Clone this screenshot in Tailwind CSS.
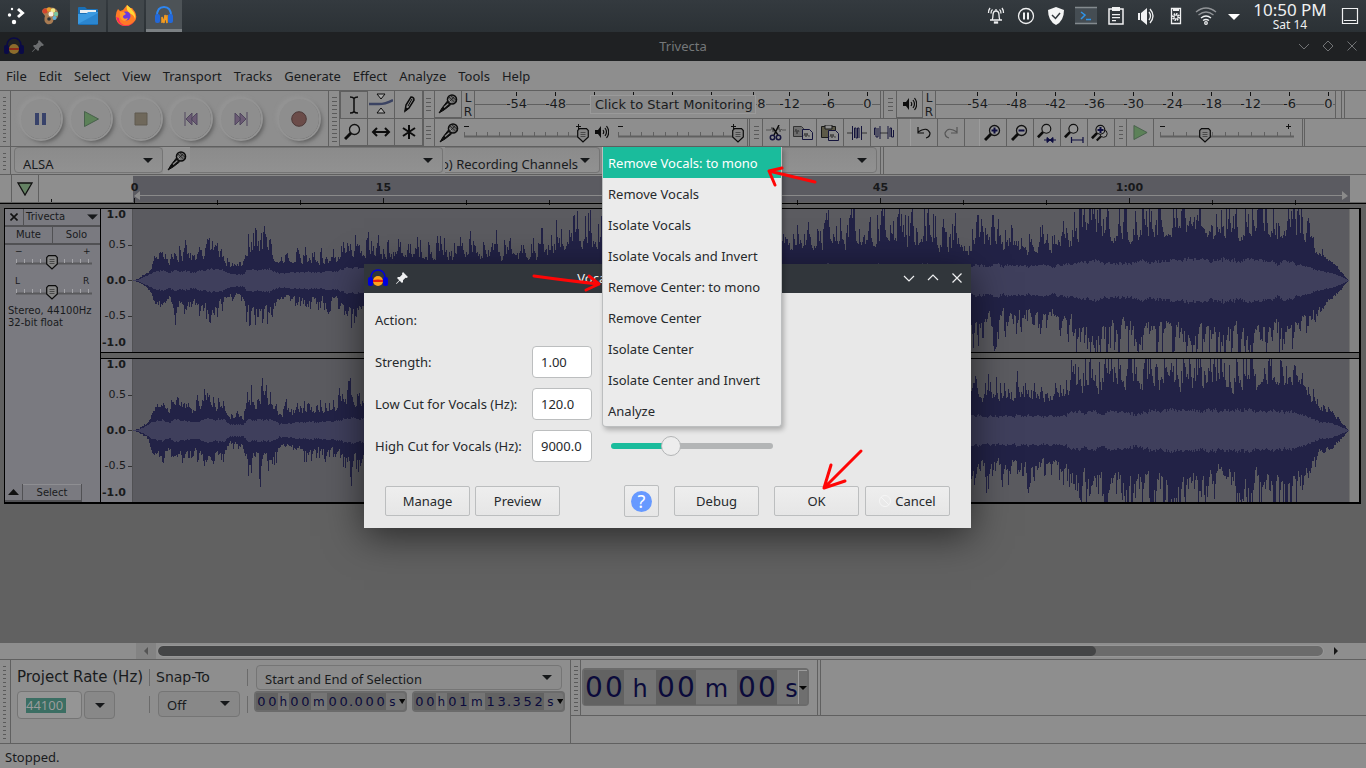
<!DOCTYPE html>
<html lang="en">

<head>
    <meta charset="UTF-8" />
    <meta name="viewport" content="width=device-width, initial-scale=1" />
    <title>Trivecta</title>
    <script src="https://cdn.jsdelivr.net/npm/@tailwindcss/browser@4"></script>
</head>

<body class="relative min-h-screen flex flex-col overflow-hidden bg-[#616161] font-['Noto_Sans',sans-serif] text-[13px] leading-4 text-[#191b1d]">

    <!-- shared icons -->
    <svg class="hidden">
        <symbol id="mic" viewBox="0 0 20 20">
            <path d="M1 19 L4 14 L9 7.500 L12.500 11 L6 16 Z" fill="#0c0c0c" stroke="#0c0c0c" />
            <path d="M6 13.500 L10.500 9.500" stroke="#8e8e8e" stroke-width="1.200" />
            <circle cx="14" cy="5.500" r="4.500" fill="#6c6c6c" stroke="#0c0c0c" stroke-width="1.600" />
            <path d="M11 3 L16.500 8 M13 2 L18 6 M11 8 L16.500 2.500" stroke="#1c1c1c" stroke-width=".8" />
            <path d="M10.500 5.500 L13 8.500" stroke="#a0a0a0" stroke-width="1" />
        </symbol>
        <symbol id="speaker" viewBox="0 0 14 14">
            <path d="M0 5h3l3-4v12l-3-4H0z" fill="#0c0c0c" />
            <path d="M8 5q1.500 2 0 4M10 3q3 4 0 8M11.500 1q4.500 6 0 12" fill="none" stroke="#0c0c0c" stroke-width="1.200" />
        </symbol>
        <symbol id="thumb" viewBox="0 0 12 15">
            <path d="M2.500 .7h7l1.800 1.800v6.500L6 14 .7 9V2.500z" fill="#858585" stroke="#0c0c0c" stroke-width="1.200" />
            <path d="M3.500 4.500h5M3.500 6.500h5M3.500 8.500h5" stroke="#4a4a4a" />
        </symbol>
        <symbol id="lens" viewBox="0 0 18 18">
            <path d="M1 16 L7 10" stroke="#0c0c0c" stroke-width="3" />
            <circle cx="10.500" cy="6.500" r="5" fill="#959595" stroke="#111" stroke-width="1.300" />
        </symbol>
        <symbol id="down" viewBox="0 0 10 5">
            <path d="M0 0h10L5 5z" fill="#16181a" />
        </symbol>
        <symbol id="phones" viewBox="0 0 20 18">
            <path d="M3 11 V8 Q4 1 10 1 T17 8 V11" fill="none" stroke="currentColor" stroke-width="1.500" />
            <rect x="0" y="8" width="5" height="9" rx="2" fill="currentColor" />
            <rect x="15" y="8" width="5" height="9" rx="2" fill="currentColor" />
        </symbol>
        <symbol id="pin" viewBox="0 0 12 12">
            <path d="M7 0l5 5-1.500 1-1-.3L7 8.200 7 10 6 11 3.700 8.700 .5 12 0 11.500 3.200 8.200 1 6l1-1 1.800 0L6.300 2.500 6 1.500z" fill="currentColor" />
        </symbol>
    </svg>

    <!-- desktop panel -->
    <header class="h-8 shrink-0 flex items-center bg-linear-to-b from-[#343a3f] to-[#2b3135] text-[#eff0f1]">
        <button class="w-8 h-8 flex items-center justify-center" aria-label="Launcher">
            <svg class="size-5" viewBox="0 0 20 20" fill="#fff"><circle cx="6" cy="3" r="1.200" /><circle cx="3.500" cy="9" r="1.700" /><circle cx="8" cy="16" r="2.200" /><path d="M12 3l4.500 4-4.500 4" fill="none" stroke="#fff" stroke-width="3" /></svg>
        </button>
        <button class="w-9 h-8 mr-[2px] flex items-center justify-center" aria-label="Paint">
            <svg class="size-5" viewBox="0 0 20 20"><path d="M2 6Q2 2 7 2q9-2 11 4 1 5-2 7-3 0-3 3-2 3-6 2-4-3-2-8z" fill="#a87b52" /><circle cx="5" cy="5" r="2.500" fill="#d4442c" /><circle cx="9" cy="3.500" r="2.200" fill="#e99a2a" /><circle cx="13" cy="4.500" r="2.300" fill="#f1e98a" /><circle cx="16" cy="8" r="2.200" fill="#79c5a0" /><circle cx="14.500" cy="12" r="2" fill="#5fb0d8" /><circle cx="11" cy="8" r="2.500" fill="#f4efe0" /><circle cx="9" cy="13" r="1.800" fill="#2e3439" /></svg>
        </button>
        <button class="w-9 h-8 mr-[2px] flex items-center justify-center bg-[#41474b]" aria-label="Files">
            <svg class="w-5 h-[18px]" viewBox="0 0 20 18"><path d="M0 1q0-1 1-1h6l2 2h10q1 0 1 1v14q0 1-1 1H1q-1 0-1-1z" fill="#1a6fb5" /><path d="M2 3h16v3H2z" fill="#e8eef2" /><path d="M0 7h8l2-2h10v12H0z" fill="#3b9ae1" /><path d="M0 17 20 6v11H0z" fill="#2b86d0" /></svg>
        </button>
        <button class="w-9 h-8 mr-[2px] flex items-center justify-center bg-[#41474b]" aria-label="Firefox">
            <svg class="size-[22px]" viewBox="0 0 22 22"><path d="M3 4l2 2 3-1 4-5 3 3 2 0 3 4q3 6-1 10-4 4-9 4-7 0-9-7Q0 8 3 4z" fill="#ff7a26" /><path d="M12 0q4 3 5 5 4 4 3 9-1-4-4-5Q10 5 12 0z" fill="#ffd836" /><path d="M1 12q2 8 10 9-7-2-7-8z" fill="#f5246b" /><path d="M2 15q4 6 10 5 5 0 8-5-3 6-9 6-6 0-9-6z" fill="#fb3152" /><circle cx="11" cy="11" r="4.500" fill="#6a3be0" /><path d="M5 7l4 0 2 2-3 2q0 4 5 2-2 5-6 2-3-3-2-8z" fill="#ff9a2a" /></svg>
        </button>
        <button class="w-9 h-8 flex flex-col items-center justify-between pt-[6px] bg-[#4d5357] border-b-3 border-[#7b8083]" aria-label="Audacity">
            <svg class="w-[18px] h-[18px]" viewBox="0 0 18 18"><path d="M2 10Q2 1 9 1t7 9" fill="none" stroke="#2e86f0" stroke-width="2" /><rect x="0" y="8" width="5" height="9" rx="2" fill="#2368d8" /><rect x="13" y="8" width="5" height="9" rx="2" fill="#2368d8" /><path d="M7 17v-6l2 6 1-8 2 8V9" fill="none" stroke="#f29a1f" stroke-width="1.500" /></svg>
        </button>

        <div class="ml-auto flex items-center">
            <svg class="w-[30px] h-5" viewBox="0 0 30 20" fill="none" stroke="#eff0f1" stroke-width="1.300"><path d="M9 14h12M11 14q1-2 1-5 0-4 3-4t3 4q0 3 1 5M15 5V3M11.500 3.500q-1.500 1-1.500 4M9 2q-1.500 2-1.500 5M18.500 3.500q1.500 1 1.500 4M21 2q1.500 2 1.500 5" /><path d="M13.500 16h3v1h-3z" fill="#eff0f1" /></svg>
            <svg class="w-[30px] h-5" viewBox="0 0 30 20" fill="none" stroke="#eff0f1" stroke-width="1.300"><circle cx="15" cy="10" r="7.500" /><path d="M13 6.500v7M17 6.500v7" stroke-width="2" /></svg>
            <svg class="w-[30px] h-5" viewBox="0 0 30 20"><path d="M15 1l8 3q0 11-8 15Q7 15 7 4z" fill="#f4f5f5" /><path d="M11 9l3.500 3.500L19 7" fill="none" stroke="#30363b" stroke-width="1.500" /></svg>
            <svg class="w-[30px] h-5" viewBox="0 0 30 20"><path d="M4 1h22v17H4z" fill="#454d53" /><path d="M4 1.500h22M4 17.500h22" stroke="#848b8f" stroke-width="1.300" /><path d="M10 6l4 3-4 4M15 13.500h5" fill="none" stroke="#2f95ea" stroke-width="1.500" /></svg>
            <svg class="w-[30px] h-5" viewBox="0 0 30 20"><path d="M8 3h14v15H8z" fill="none" stroke="#eff0f1" stroke-width="1.500" /><path d="M11 1h8v4h-8zM11 8h8v1.300h-8zM11 11h8v1.300h-8zM11 14h4v1.300h-4z" fill="#eff0f1" /></svg>
            <svg class="w-[30px] h-5" viewBox="0 0 30 20"><path d="M7 7h2v7H7zM10 7l6-5v17l-6-5z" fill="#eff0f1" /><path d="M18 6q3 4 0 8M19 3q6 7 0 14" fill="none" stroke="#eff0f1" stroke-width="1.300" /></svg>
            <svg class="w-[30px] h-5" viewBox="0 0 30 20"><path d="M10.500 2.500h9v15h-9z" fill="none" stroke="#eff0f1" stroke-width="1.300" /><path d="M12 4h6" stroke="#eff0f1" stroke-width="2" /><circle cx="15" cy="11" r="3" fill="none" stroke="#eff0f1" stroke-width="2" stroke-dasharray="1.500 .8" /><circle cx="15" cy="11" r="2" fill="none" stroke="#eff0f1" /></svg>
            <svg class="w-[30px] h-5" viewBox="0 0 30 20" fill="none" stroke="#eff0f1" stroke-width="1.300"><path d="M5 6q10-8 20 0M7.500 9q7.500-6 15 0" opacity=".5" /><path d="M10 12q5-4 10 0" /><path d="M12 14.500q3-2 6 0" /><circle cx="15" cy="17" r="1.300" /></svg>
            <svg class="w-[26px] h-5" viewBox="0 0 26 20"><path d="M7 8h12l-6 6z" fill="#fff" /></svg>
            <div class="w-[86px] text-center">
                <div class="text-[17px] leading-[18px]">10:50 PM</div>
                <div class="text-xs leading-3">Sat 14</div>
            </div>
            <svg class="w-[33px] h-5" viewBox="0 0 33 20"><path d="M9.500 2.500h15v15h-15zM11 14.500h12" fill="none" stroke="#eff0f1" stroke-width="1.200" /></svg>
        </div>
    </header>

    <!-- window title -->
    <div class="h-[29px] shrink-0 flex items-center px-1 pb-px bg-[#1f2123] text-[#747779]">
        <div class="w-[100px] flex items-center gap-2">
            <svg class="w-5 h-[18px] text-[#0a0a46]" viewBox="0 0 20 18"><use href="#phones" /><ellipse cx="10" cy="12" rx="5" ry="5" fill="#8c6c2c" /><path d="M5 11h10v2H5z" fill="#8c2a18" /></svg>
            <svg class="size-3 text-[#6b6d6f]"><use href="#pin" /></svg>
        </div>
        <div class="flex-1 text-center">Trivecta</div>
        <div class="w-[100px] flex items-center justify-end gap-3 pr-1">
            <svg class="size-3" viewBox="0 0 12 12" fill="none" stroke="#717375"><path d="M1 4l5 5 5-5" /></svg>
            <svg class="size-3" viewBox="0 0 12 12" fill="none" stroke="#717375"><path d="M6 1l5 5-5 5-5-5z" /></svg>
            <svg class="size-3" viewBox="0 0 12 12" fill="none" stroke="#717375"><path d="M1.500 1.500l9 9M10.500 1.500l-9 9" /></svg>
        </div>
    </div>

    <nav class="h-[29px] shrink-0 flex items-center gap-3 pl-[6px] bg-[#8e8e8e]">
        <button>File</button><button>Edit</button><button>Select</button><button>View</button><button>Transport</button><button>Tracks</button><button>Generate</button><button>Effect</button><button>Analyze</button><button>Tools</button><button>Help</button>
    </nav>

    <!-- toolbars -->
    <div class="h-[57px] shrink-0 flex bg-[#8e8e8e] border-y border-[#606060]">
        <div class="w-[11px] border-r border-[#606060] p-[3px] pr-1"><div class="h-full bg-[repeating-linear-gradient(#8e8e8e_0_3px,#5a5a5a_3px_4px)]"></div></div>
        <div class="w-[318px] flex items-center gap-[10px] pl-[10px] border-r border-[#606060]">
            <button class="size-10 rounded-full flex items-center justify-center bg-[#8e8e8e] shadow-[3px_3px_4px_#5c5c5c,-2px_-2px_4px_#989898] outline-2 outline-[#939393]" aria-label="Pause">
                <svg class="size-4" viewBox="0 0 16 16"><path d="M2 2h4v12H2zM9 2h4v12H9z" fill="#38426a" /></svg>
            </button>
            <button class="size-10 rounded-full flex items-center justify-center bg-[#8e8e8e] shadow-[3px_3px_4px_#5c5c5c,-2px_-2px_4px_#989898] outline-2 outline-[#939393]" aria-label="Play">
                <svg class="size-4" viewBox="0 0 16 16"><path d="M1.500 .5v15l14-7.500z" fill="#5c8158" stroke="#48604c" /></svg>
            </button>
            <button class="size-10 rounded-full flex items-center justify-center bg-[#8e8e8e] shadow-[3px_3px_4px_#5c5c5c,-2px_-2px_4px_#989898] outline-2 outline-[#939393]" aria-label="Stop">
                <svg class="size-4" viewBox="0 0 16 16"><path d="M2 2h12v12H2z" fill="#6f685b" stroke="#605a50" /></svg>
            </button>
            <button class="size-10 rounded-full flex items-center justify-center bg-[#8e8e8e] shadow-[3px_3px_4px_#5c5c5c,-2px_-2px_4px_#989898] outline-2 outline-[#939393]" aria-label="Skip to start">
                <svg class="size-4" viewBox="0 0 16 16"><path d="M2 1v14M3 8l6-6v12zM8 8l6-6v12z" fill="#6b5b74" stroke="#50475e" /></svg>
            </button>
            <button class="size-10 rounded-full flex items-center justify-center bg-[#8e8e8e] shadow-[3px_3px_4px_#5c5c5c,-2px_-2px_4px_#989898] outline-2 outline-[#939393]" aria-label="Skip to end">
                <svg class="size-4" viewBox="0 0 16 16"><path d="M14 1v14M13 8L7 2v12zM8 8L2 2v12z" fill="#6b5b74" stroke="#50475e" /></svg>
            </button>
            <button class="ml-2 size-10 rounded-full flex items-center justify-center bg-[#8e8e8e] shadow-[3px_3px_4px_#5c5c5c,-2px_-2px_4px_#989898] outline-2 outline-[#939393]" aria-label="Record">
                <svg class="size-4" viewBox="0 0 16 16"><circle cx="8" cy="8" r="7.300" fill="#6b4c49" stroke="#4c3837" /></svg>
            </button>
        </div>
        <div class="w-[11px] border-r border-[#606060] p-[3px] pr-[2px]"><div class="h-full bg-[repeating-linear-gradient(#8e8e8e_0_3px,#5a5a5a_3px_4px)]"></div></div>
        <div class="w-[84px] grid grid-cols-3 grid-rows-2 border-r border-[#606060] [&>button]:flex [&>button]:items-center [&>button]:justify-center [&>button]:border-r [&>button]:border-b [&>button]:border-[#606060]">
            <button class="border-t border-l bg-[#8a8a8a]" aria-label="Selection"><svg class="size-5" viewBox="0 0 20 20"><path d="M6 2q3 0 4 1.500Q11 2 14 2M6 18q3 0 4-1.500Q11 18 14 18M10 3v14" fill="none" stroke="#0c0c0c" stroke-width="1.500" /></svg></button>
            <button aria-label="Envelope"><svg class="w-6 h-[22px]" viewBox="0 0 24 22"><path d="M0 11h10q6 0 14-4" fill="none" stroke="#3b4362" stroke-width="2.500" /><path d="M8 1h8l-4 5zM8 20h8l-4-5z" fill="#aaa" stroke="#0c0c0c" /></svg></button>
            <button aria-label="Draw"><svg class="size-5" viewBox="0 0 20 20"><path d="M6 17l1-6 5-8q3 0 3 3l-5 8z" fill="#8a8a8a" stroke="#0c0c0c" stroke-width="1.500" /><path d="M9 12l4-7M6 17l1-3 2 1z" stroke="#0c0c0c" fill="#0c0c0c" /></svg></button>
            <button aria-label="Zoom"><svg class="size-[18px]"><use href="#lens" /></svg></button>
            <button aria-label="Time shift"><svg class="w-5 h-3" viewBox="0 0 20 12"><path d="M2 6h16M6 2L2 6l4 4M14 2l4 4-4 4" fill="none" stroke="#0c0c0c" stroke-width="2" /></svg></button>
            <button aria-label="Multi"><svg class="size-4" viewBox="0 0 16 16"><path d="M8 1v14M2 4l12 8M14 4L2 12" stroke="#0c0c0c" stroke-width="2" /></svg></button>
        </div>

        <div class="flex-1 min-w-0 flex flex-col">
            <!-- meters -->
            <div class="h-7 flex border-b border-[#606060] font-['DejaVu_Sans',sans-serif]">
                <div class="w-[11px] border-r border-[#606060] py-1 pl-[2px] pr-[3px]"><div class="h-full bg-[repeating-linear-gradient(#8e8e8e_0_3px,#5a5a5a_3px_4px)]"></div></div>
                <button class="w-[27px] flex items-center justify-center border-r border-b border-[#606060]" aria-label="Record meter"><svg class="size-5"><use href="#mic" /></svg></button>
                <div class="w-[13px] text-center text-xs leading-[14px] border-r border-[#606060]">L<br>R</div>
                <div class="relative w-[406px] flex items-center overflow-hidden bg-[linear-gradient(#606060,#606060)] bg-[length:100%_1px] bg-[position:0_13px] bg-no-repeat border-r border-[#606060]">
                    <!-- the monitoring button hides most of the middle of the scale -->
                    <div class="-mt-1 flex pl-[22px] [&>span]:w-[39px] [&>span]:h-[22px] [&>span]:shrink-0 [&>span]:text-center" data-ticks>
                        <span>-54</span><span>-48</span><span></span><span></span><span></span><span></span><span class="pl-[22px]">8</span><span>-12</span><span>-6</span><span>0</span>
                    </div>
                    <button class="absolute left-[115px] top-1 w-[166px] h-[19px] border border-[#9a9a9a] bg-[#8a8a8a] text-left pl-1 whitespace-nowrap">Click to Start Monitoring</button>
                </div>
                <div class="w-[3px] border-r border-[#606060]"></div>
                <div class="w-[13px] border-r border-[#606060] p-1 pr-[3px]"><div class="h-full bg-[repeating-linear-gradient(#8e8e8e_0_3px,#5a5a5a_3px_4px)]"></div></div>
                <button class="w-[26px] flex items-center justify-center border-r border-b border-[#606060]" aria-label="Playback meter"><svg class="size-[14px]"><use href="#speaker" /></svg></button>
                <div class="w-[13px] text-center text-xs leading-[14px] border-r border-[#606060]">L<br>R</div>
                <div class="w-[400px] flex items-center overflow-hidden bg-[linear-gradient(#606060,#606060)] bg-[length:100%_1px] bg-[position:0_13px] bg-no-repeat border-r border-[#606060]">
                    <div class="-mt-1 flex pl-[22px] [&>span]:w-[39px] [&>span]:h-[22px] [&>span]:shrink-0 [&>span]:text-center" data-ticks>
                        <span>-54</span><span>-48</span><span>-42</span><span>-36</span><span>-30</span><span>-24</span><span>-18</span><span>-12</span><span>-6</span><span>0</span>
                    </div>
                </div>
                <div class="w-[6px] border-r border-[#606060]"></div>
                <div class="w-[3px] border-r border-[#606060]"></div>
            </div>
            <!-- mixer, edit, play speed -->
            <div class="flex-1 flex">
                <div class="w-[11px] border-r border-[#606060] py-1 pl-[2px] pr-[3px]"><div class="h-full bg-[repeating-linear-gradient(#8e8e8e_0_3px,#5a5a5a_3px_4px)]"></div></div>
                <div class="w-[27px] flex items-center justify-center"><svg class="size-5"><use href="#mic" /></svg></div>
                <label class="relative w-[130px] h-6"><svg class="w-full h-full" data-slider="121"></svg><input type="range" value="98" aria-label="Recording volume" class="absolute inset-0 w-full opacity-0" /></label>
                <svg class="mt-[6px] ml-[3px] mr-1 size-[14px]"><use href="#speaker" /></svg>
                <label class="relative w-[131px] ml-[3px] h-6"><svg class="w-full h-full" data-slider="122"></svg><input type="range" value="98" aria-label="Playback volume" class="absolute inset-0 w-full opacity-0" /></label>
                <div class="w-[3px] border-x border-[#606060]"></div>
                <div class="w-[13px] border-r border-[#606060] p-1 pr-[3px]"><div class="h-full bg-[repeating-linear-gradient(#8e8e8e_0_3px,#5a5a5a_3px_4px)]"></div></div>
                <div class="flex [&>button]:w-[27px] [&>button]:flex [&>button]:items-center [&>button]:justify-center [&>button]:border-r [&>button]:border-[#606060]">
                    <button aria-label="Cut"><svg class="w-5 h-4" viewBox="0 0 20 16" fill="none" stroke="#222"><path d="M0 5h5l1-3 1 5 1-3M12 5l1-3 1 5 1-3 1 1h4" stroke="#555" /><path d="M13 0L8 10M7 3l5 7" stroke="#0c0c0c" stroke-width="1.500" /><circle cx="6.500" cy="12.500" r="2.200" stroke="#14143c" stroke-width="1.500" /><circle cx="12.500" cy="12.500" r="2.200" stroke="#14143c" stroke-width="1.500" /></svg></button>
                    <button aria-label="Copy"><svg class="w-5 h-4" viewBox="0 0 20 16"><path d="M.5 1.500h8l2 2v8H.5z" fill="#6f6f6f" stroke="#333" /><path d="M9.500 4.500h7l3 3v7h-10z" fill="#8e8e8e" stroke="#14143c" /><path d="M2 7l1-3 1 5 1-4 1 2M11 11l1-3 1 4 1-4 1 3 2 0" fill="none" stroke="#444" /></svg></button>
                    <button aria-label="Paste"><svg class="w-[18px] h-4" viewBox="0 0 18 16"><path d="M.5 1.500h14v11H.5z" fill="#5d5a48" stroke="#1a1a1a" /><path d="M4 0h7v4H4z" fill="#8e8e8e" stroke="#1a1a1a" /><path d="M7.500 5.500h7l3 3v7h-10z" fill="#8e8e8e" stroke="#14143c" /><path d="M9 12l1-3 1 4 1-4 1 3 2 0" fill="none" stroke="#444" /></svg></button>
                    <button aria-label="Trim"><svg class="w-5 h-4" viewBox="0 0 20 16"><path d="M0 8h5M15 8h5" stroke="#333" /><path d="M5.500 1v14M14.500 1v14M7.500 13V3h1.500v10h1.500V3h1.500v10" fill="none" stroke="#14143c" /></svg></button>
                    <button aria-label="Silence"><svg class="w-5 h-4" viewBox="0 0 20 16"><path d="M6 8h8" stroke="#333" /><path d="M.5 10V3H2v9h2V3M6 1v13M14 1v13M16 12V3h1.500v9h2V5" fill="none" stroke="#14143c" /></svg></button>
                    <span class="w-[13px] border-r border-[#9c9c9c]"></span>
                    <button aria-label="Undo"><svg class="w-4 h-3" viewBox="0 0 16 12"><path d="M2 5q9-6 12 1 0 4-4 5M2 0v6h6" fill="none" stroke="#0c0c0c" stroke-width="1.200" /></svg></button>
                    <button aria-label="Redo"><svg class="w-4 h-3" viewBox="0 0 16 12"><path d="M14 5Q5-1 2 6q0 4 4 5M14 0v6H8" fill="none" stroke="#555" stroke-width="1.200" /></svg></button>
                    <span class="w-[15px] border-r border-[#9c9c9c]"></span>
                    <button aria-label="Zoom in"><svg class="size-[18px]" viewBox="0 0 18 18"><use href="#lens" /><path d="M7.500 6.500h6M10.500 3.500v6" stroke="#0e0e40" stroke-width="2" /></svg></button>
                    <button aria-label="Zoom out"><svg class="size-[18px]" viewBox="0 0 18 18"><use href="#lens" /><path d="M7.500 6.500h6" stroke="#0e0e40" stroke-width="2" /></svg></button>
                    <button aria-label="Fit selection"><svg class="w-5 h-5" viewBox="0 0 20 20"><use href="#lens" width="16" height="16" /><path d="M7 17h12M10 14.500l3 2.500-3 2.500zM16 14.500L13 17l3 2.500z" stroke="#0e0e40" fill="#0e0e40" /></svg></button>
                    <button aria-label="Fit project"><svg class="w-5 h-5" viewBox="0 0 20 20"><use href="#lens" width="16" height="16" /><path d="M7 17h12M7.500 14v6M19 14v6" stroke="#0e0e40" stroke-width="1.200" /></svg></button>
                    <button aria-label="Zoom toggle"><svg class="w-5 h-[18px]" viewBox="0 0 20 18"><use href="#lens" x="5" y="5" width="13" height="13" /><use href="#lens" width="16" height="16" /><path d="M6.500 6h6M9.500 3v6" stroke="#0e0e40" stroke-width="2" /></svg></button>
                </div>
                <div class="w-[12px] border-r border-[#606060] p-1 pr-[3px]"><div class="h-full bg-[repeating-linear-gradient(#8e8e8e_0_3px,#5a5a5a_3px_4px)]"></div></div>
                <button class="w-[27px] flex items-center justify-center border-r border-[#606060]" aria-label="Play at speed"><svg class="size-[15px]" viewBox="0 0 16 16"><path d="M1 .5v15L15 8z" fill="#5c8158" stroke="#48604c" /></svg></button>
                <label class="relative w-[144px] ml-1 h-6"><svg class="w-full h-full" data-slider="47"></svg><input type="range" value="33" aria-label="Playback speed" class="absolute inset-0 w-full opacity-0" /></label>
                <div class="w-[3px] border-x border-[#606060]"></div>
            </div>
        </div>
    </div>

    <!-- device toolbar -->
    <div class="h-7 shrink-0 flex bg-[#8e8e8e] border-b border-[#606060]">
        <div class="w-[11px] border-r border-[#606060] p-[3px] pr-1"><div class="h-full bg-[repeating-linear-gradient(#8e8e8e_0_3px,#5a5a5a_3px_4px)]"></div></div>
        <div class="relative ml-[3px] w-[149px]">
            <select aria-label="Audio host" class="appearance-none w-full h-[26px] border border-[#757575] rounded-sm bg-linear-to-b from-[#8b8b8b] to-[#919191] pl-2 pt-2"><option>ALSA</option></select>
            <svg class="absolute right-[10px] top-[11px] w-[10px] h-[5px] pointer-events-none"><use href="#down" /></svg>
        </div>
        <div class="w-[27px] flex items-center justify-center bg-[#949494]"><svg class="size-5"><use href="#mic" /></svg></div>
        <div class="relative w-[253px]">
            <select aria-label="Recording device" class="appearance-none w-full h-[26px] border border-l-0 border-[#757575] rounded-r-sm bg-linear-to-b from-[#8b8b8b] to-[#919191]"><option></option></select>
            <svg class="absolute right-[10px] top-[11px] w-[10px] h-[5px] pointer-events-none"><use href="#down" /></svg>
        </div>
        <div class="relative ml-[2px] w-[155px]">
            <select aria-label="Recording channels" class="appearance-none w-full h-[26px] border border-l-0 border-[#757575] rounded-r-sm bg-linear-to-b from-[#8b8b8b] to-[#919191] pt-2 -indent-1"><option>o) Recording Channels</option></select>
            <svg class="absolute right-[10px] top-[11px] w-[10px] h-[5px] pointer-events-none"><use href="#down" /></svg>
        </div>
        <div class="relative ml-[2px] w-[275px]">
            <select aria-label="Playback device" class="appearance-none w-full h-[26px] border border-[#757575] rounded-sm bg-linear-to-b from-[#8b8b8b] to-[#919191]"><option></option></select>
            <svg class="absolute right-[10px] top-[11px] w-[10px] h-[5px] pointer-events-none"><use href="#down" /></svg>
        </div>
        <div class="ml-[3px] w-1 border-x border-[#606060]"></div>
    </div>

    <!-- timeline -->
    <div class="h-7 shrink-0 flex bg-[#8e8e8e] border-b border-[#606060]">
        <div class="w-3 border-r border-[#606060]"></div>
        <button class="w-[27px] flex items-center justify-center border-r border-[#606060]" aria-label="Pinned head"><svg class="w-4 h-[14px]" viewBox="0 0 16 14"><path d="M1 1h14L8 13z" fill="#648263" stroke="#111" stroke-width="1.300" /></svg></button>
        <div class="w-[94px]"><svg class="w-full h-full"><path d="M12.500 24v3" stroke="#111" /></svg></div>
        <div class="flex-1 border-t border-[#8a8a8a] bg-[#5b5b61]"><svg id="ruler" class="w-full h-[27px] overflow-visible font-['DejaVu_Sans'] text-[11px] font-bold" fill="#18191b"></svg></div>
        <div class="w-4"></div>
    </div>

    <!-- tracks -->
    <main class="flex-1 flex flex-col border-t border-black pt-1 pl-1 pr-[5px]">
        <div class="flex border-2 border-t border-l border-black bg-[#616161] font-['DejaVu_Sans',sans-serif] text-[10px] leading-3">
            <div class="w-[96px] shrink-0 flex flex-col bg-[#7a7a80] border-r border-black">
                <div class="h-[18px] flex border-b-2 border-[#515154]">
                    <button class="w-[19px] flex items-center justify-center border-r border-[#515154]" aria-label="Close track"><svg class="size-2" viewBox="0 0 8 8"><path d="M.5 .5l7 7M7.500 .5l-7 7" stroke="#111" stroke-width="1.600" /></svg></button>
                    <button class="flex-1 flex items-center justify-between pl-[2px] pr-[2px]">Trivecta<svg class="w-[11px] h-[6px]" viewBox="0 0 10 5"><use href="#down" /></svg></button>
                </div>
                <div class="h-[18px] flex border-b-2 border-[#515154]">
                    <button class="w-12 border-r border-[#515154]">Mute</button><button class="flex-1">Solo</button>
                </div>
                <label class="relative mx-2 h-[26px]"><svg class="w-full h-full" data-gain="−,+"></svg><input type="range" aria-label="Gain" class="absolute inset-0 w-full opacity-0" /></label>
                <label class="relative mt-1 mx-2 h-[26px]"><svg class="w-full h-full" data-gain="L,R"></svg><input type="range" aria-label="Pan" class="absolute inset-0 w-full opacity-0" /></label>
                <p class="mt-1 pl-[3px] whitespace-nowrap">Stereo, 44100Hz<br>32-bit float</p>
                <div class="mt-auto h-[18px] flex w-[77px] border-r border-b-2 border-[#515154]">
                    <button class="w-[18px] flex items-center justify-center border-r border-[#515154]" aria-label="Collapse"><svg class="w-[11px] h-[6px]" viewBox="0 0 11 6"><path d="M0 6h11L5.500 0z" fill="#111" /></svg></button>
                    <button class="flex-1 border-t border-[#8e8e92]">Select</button>
                </div>
            </div>
            <div class="flex-1 min-w-0 flex flex-col">
                <div class="flex h-[143px]">
                    <div class="w-8 h-[143px] grid grid-rows-[18px_36px_35px_36px_18px] items-center justify-items-end pr-[6px] bg-[#7a7a80] bg-[linear-gradient(#333,#333),linear-gradient(#333,#333),linear-gradient(#333,#333)] bg-[size:4px_1px] bg-no-repeat bg-[position:100%_36px,100%_71px,100%_107px] border-r border-[#515154] text-[11px] [&>span:nth-child(odd)]:font-bold">
                        <span class="self-start">1.0</span><span>0.5</span><span>0.0</span><span>-0.5</span><span>-1.0</span>
                    </div>
                    <svg class="flex-1 min-w-0 h-full bg-[#5b5b60]" data-wave="7" viewBox="0 0 1216 143" preserveAspectRatio="none" shape-rendering="crispEdges"></svg>
                    <div class="w-[10px] bg-[#828282] border-l border-[#6e6e6e]"></div>
                </div>
                <div class="h-[7px] border-y border-black"></div>
                <div class="flex h-[143px]">
                    <div class="w-8 h-[143px] grid grid-rows-[18px_36px_35px_36px_18px] items-center justify-items-end pr-[6px] bg-[#7a7a80] bg-[linear-gradient(#333,#333),linear-gradient(#333,#333),linear-gradient(#333,#333)] bg-[size:4px_1px] bg-no-repeat bg-[position:100%_36px,100%_71px,100%_107px] border-r border-[#515154] text-[11px] [&>span:nth-child(odd)]:font-bold">
                        <span class="self-start">1.0</span><span>0.5</span><span>0.0</span><span>-0.5</span><span>-1.0</span>
                    </div>
                    <svg class="flex-1 min-w-0 h-full bg-[#5b5b60]" data-wave="29" viewBox="0 0 1216 143" preserveAspectRatio="none" shape-rendering="crispEdges"></svg>
                    <div class="w-[10px] bg-[#828282] border-l border-[#6e6e6e]"></div>
                </div>
            </div>
        </div>
    </main>

    <!-- horizontal scrollbar -->
    <div class="h-4 shrink-0 flex items-center bg-[#8e8e8e] pl-[136px] pr-7">
        <div class="w-5 h-4 flex items-center justify-center bg-[#838383]"><svg class="w-1 h-2" viewBox="0 0 4 8"><path d="M4 0v8L0 4z" fill="#555" /></svg></div>
        <div class="flex-1 h-[10px] ml-[2px] rounded-full bg-[#6b6b6b] outline outline-[#969696]"><div class="w-[80.5%] h-full rounded-full bg-[#444546]"></div></div>
        <svg class="ml-[11px] w-1 h-2" viewBox="0 0 4 8"><path d="M0 0v8l4-4z" fill="#161616" /></svg>
    </div>

    <!-- selection toolbar -->
    <div class="h-[85px] shrink-0 flex bg-[#8e8e8e] border-y border-[#606060]">
        <div class="w-[11px] border-r border-[#606060] p-[3px] pr-1"><div class="h-full bg-[repeating-linear-gradient(#8e8e8e_0_3px,#5a5a5a_3px_4px)]"></div></div>
        <div class="w-[560px] flex pt-[5px] border-r border-[#606060]">
            <div class="w-[138px] pl-[6px]">
                <label for="rate" class="block h-[26px] leading-6 text-[15px] font-['DejaVu_Sans'] whitespace-nowrap">Project Rate (Hz)</label>
                <div class="flex gap-[2px]">
                    <div class="w-[65px] h-7 flex items-center pl-2 rounded-sm border border-[#757575] bg-[#959595]"><input id="rate" type="text" value="44100" class="w-10 h-[15px] bg-[#3b6e63] text-[#9a9c9c]" /></div>
                    <button class="w-[31px] h-7 flex items-center justify-center rounded-sm border border-[#757575] bg-[#888888]" aria-label="Rates"><svg class="w-[10px] h-[5px]"><use href="#down" /></svg></button>
                </div>
            </div>
            <div class="flex flex-col gap-[10px] pt-1"><i class="w-px h-[17px] bg-[#6b6b6b]"></i><i class="w-px h-[17px] bg-[#6b6b6b]"></i></div>
            <div class="w-[97px] pl-[6px]">
                <label for="snap" class="block h-[26px] leading-6 text-sm font-['DejaVu_Sans']">Snap-To</label>
                <div class="relative ml-[2px] w-[82px]">
                    <select id="snap" class="appearance-none w-full h-[26px] pl-2 pt-px rounded-sm border border-[#757575] bg-[#888888]"><option>Off</option></select>
                    <svg class="absolute right-[10px] top-[10px] w-[10px] h-[5px] pointer-events-none"><use href="#down" /></svg>
                </div>
            </div>
            <div class="flex flex-col gap-[10px] pt-1"><i class="w-px h-[17px] bg-[#6b6b6b]"></i><i class="w-px h-[17px] bg-[#6b6b6b]"></i></div>
            <div class="pl-[6px]">
                <div class="relative ml-[2px] w-[306px] h-[26px]">
                    <select aria-label="Selection mode" class="appearance-none w-full h-[25px] pl-2 pt-[3px] rounded-sm border border-[#757575] bg-[#8c8c8c]"><option>Start and End of Selection</option></select>
                    <svg class="absolute right-[10px] top-[10px] w-[10px] h-[5px] pointer-events-none"><use href="#down" /></svg>
                </div>
                <div class="flex gap-[5px] font-['DejaVu_Sans'] text-[#0b0b3b]">
                    <div class="h-[21px] w-[153px] flex items-center border-2 border-[#6b6b6b] rounded-sm bg-[#757575] [&>b]:flex [&>b]:font-normal [&>b]:bg-[#626262] [&>b]:leading-[17px] [&_i]:w-[11px] [&_i]:not-italic [&_i]:text-center [&>em]:not-italic [&>em]:text-center [&>em]:text-xs">
                        <b><i>0</i><i>0</i></b><em class="w-3 pt-px">h</em><b><i>0</i><i>0</i></b><em class="w-[18px] pt-px">m</em><b><i>0</i><i>0</i><u class="w-1 no-underline">.</u><i>0</i><i>0</i><i>0</i></b><em class="w-[14px] pt-px">s</em><svg class="w-[7px] h-[5px] bg-[#757575]" viewBox="0 0 10 5" preserveAspectRatio="none"><path d="M0 0h10L5 5z" fill="#060606" /></svg>
                    </div>
                    <div class="h-[21px] w-[153px] flex items-center border-2 border-[#6b6b6b] rounded-sm bg-[#757575] [&>b]:flex [&>b]:font-normal [&>b]:bg-[#626262] [&>b]:leading-[17px] [&_i]:w-[11px] [&_i]:not-italic [&_i]:text-center [&>em]:not-italic [&>em]:text-center [&>em]:text-xs">
                        <b><i>0</i><i>0</i></b><em class="w-3 pt-px">h</em><b><i>0</i><i>1</i></b><em class="w-[18px] pt-px">m</em><b><i>1</i><i>3</i><u class="w-1 no-underline">.</u><i>3</i><i>5</i><i>2</i></b><em class="w-[14px] pt-px">s</em><svg class="w-[7px] h-[5px] bg-[#757575]" viewBox="0 0 10 5" preserveAspectRatio="none"><path d="M0 0h10L5 5z" fill="#060606" /></svg>
                    </div>
                </div>
            </div>
        </div>
        <div class="flex-1 h-14 flex border-b border-[#606060]">
            <div class="w-[10px] border-r border-[#606060] p-[3px] pr-[2px]"><div class="h-full bg-[repeating-linear-gradient(#8e8e8e_0_3px,#5a5a5a_3px_4px)]"></div></div>
            <div class="mt-2 ml-[1px] w-[227px] h-[38px] flex items-center border-2 border-[#6b6b6b] rounded-sm bg-[#757575] font-['DejaVu_Sans'] text-[28px] text-[#0b0b3b] [&>b]:flex [&>b]:font-normal [&>b]:bg-[#626262] [&>b]:leading-[34px] [&>b]:pt-px [&_i]:w-5 [&_i]:not-italic [&_i]:text-center [&>em]:not-italic [&>em]:text-center [&>em]:text-2xl">
                <b><i>0</i><i>0</i></b><em class="w-8 pt-1">h</em><b><i>0</i><i>0</i></b><em class="w-[41px] pt-1">m</em><b><i>0</i><i>0</i></b><em class="flex-1 pl-2 pt-1">s</em>
                <button class="w-[9px] h-full flex items-center justify-center border-l border-t border-[#9b9b9b] bg-[#6f6f6f]" aria-label="Format"><svg class="w-2 h-1" viewBox="0 0 10 5" preserveAspectRatio="none"><path d="M0 0h10L5 5z" fill="#060606" /></svg></button>
            </div>
            <div class="ml-2 w-1 border-x border-[#606060]"></div>
        </div>
    </div>

    <footer class="h-6 shrink-0 flex items-center pl-[5px] pt-[2px] bg-[#8e8e8e]">Stopped.</footer>

    <!-- effect dialog -->
    <section role="dialog" aria-label="Vocal Reduction and Isolation" class="absolute left-[364px] top-[264px] w-[607px] bg-[#e8e8e8] text-[#26292c] shadow-[0_8px_36px_#00000090]">
        <div class="h-[29px] flex items-center px-1 pb-px bg-[#31363b] text-[#eff0f1]">
            <div class="w-20 flex items-center gap-2">
                <svg class="w-5 h-[18px] text-[#0000dc]" viewBox="0 0 20 18"><use href="#phones" /><ellipse cx="10" cy="12" rx="5" ry="5" fill="#ffa31a" /><path d="M5 11q5-1 10 0v2H5z" fill="#e81c10" /></svg>
                <svg class="size-3"><use href="#pin" /></svg>
            </div>
            <div class="flex-1 text-center">Vocal Reduction and Isolation</div>
            <div class="w-20 flex items-center justify-end gap-3 pr-1">
                <svg class="size-3" viewBox="0 0 12 12" fill="none" stroke="#eff0f1" stroke-width="1.200"><path d="M1 4l5 5 5-5" /></svg>
                <svg class="size-3" viewBox="0 0 12 12" fill="none" stroke="#eff0f1" stroke-width="1.200"><path d="M1 8l5-5 5 5" /></svg>
                <svg class="size-3" viewBox="0 0 12 12" fill="none" stroke="#eff0f1" stroke-width="1.200"><path d="M1.500 1.500l9 9M10.500 1.500l-9 9" /></svg>
            </div>
        </div>
        <form class="pt-[6px] pb-[11px]">
            <div class="grid grid-cols-[157px_60px_1fr] auto-rows-[42px] items-center pl-[11px]">
                <span class="col-span-3">Action:</span>
                <label for="strength">Strength:</label>
                <input id="strength" type="text" value="1.00" class="w-[60px] h-8 px-2 bg-white border border-[#bcbebf] rounded-sm" /><span></span>
                <label for="low">Low Cut for Vocals (Hz):</label>
                <input id="low" type="text" value="120.0" class="w-[60px] h-8 px-2 bg-white border border-[#bcbebf] rounded-sm" /><span></span>
                <label for="high">High Cut for Vocals (Hz):</label>
                <input id="high" type="text" value="9000.0" class="w-[60px] h-8 px-2 bg-white border border-[#bcbebf] rounded-sm" />
                <input type="range" value="35" aria-label="High cut" class="ml-[19px] w-[162px] h-[6px] appearance-none rounded-full bg-[linear-gradient(90deg,#1abc9c_37%,#b3b5b6_37%)] [&::-webkit-slider-thumb]:appearance-none [&::-webkit-slider-thumb]:size-5 [&::-webkit-slider-thumb]:rounded-full [&::-webkit-slider-thumb]:border [&::-webkit-slider-thumb]:border-[#b3b5b6] [&::-webkit-slider-thumb]:bg-[#ededed]" />
            </div>
            <div class="mt-[18px] flex items-center pl-[21px]">
                <button type="button" class="w-[85px] h-[30px] border border-[#bcbebf] rounded-xs bg-linear-to-b from-[#eeeeee] to-[#e6e6e6]">Manage</button>
                <button type="button" class="ml-[5px] w-[85px] h-[30px] border border-[#bcbebf] rounded-xs bg-linear-to-b from-[#eeeeee] to-[#e6e6e6]">Preview</button>
                <button type="button" aria-label="Help" class="ml-16 w-[35px] h-8 flex items-center justify-center border border-[#bcbebf] rounded-xs bg-linear-to-b from-[#eeeeee] to-[#e6e6e6]"><span class="size-[21px] rounded-full bg-[#6699ff] text-white text-lg leading-5">?</span></button>
                <button type="button" class="ml-[15px] w-[85px] h-[30px] border border-[#bcbebf] rounded-xs bg-linear-to-b from-[#eeeeee] to-[#e6e6e6]">Debug</button>
                <button type="button" class="ml-[15px] w-[85px] h-[30px] border border-[#bcbebf] rounded-xs bg-linear-to-b from-[#eeeeee] to-[#e6e6e6]">OK</button>
                <button type="button" class="ml-[6px] w-[85px] h-[30px] flex items-center justify-center gap-1 border border-[#bcbebf] rounded-xs bg-linear-to-b from-[#eeeeee] to-[#e6e6e6]"><svg class="size-3" viewBox="0 0 12 12" fill="none" stroke="#f5f5f5"><circle cx="6" cy="6" r="5.500" /><path d="M2 2l8 8" /></svg>Cancel</button>
            </div>
        </form>
    </section>

    <!-- open action list -->
    <div role="listbox" aria-label="Action" class="absolute left-[602px] top-[147px] w-[180px] flex flex-col border border-t-0 border-[#bcbebf] rounded-b-sm bg-[#ebebeb] text-[#26292c] shadow-[2px_3px_5px_#00000040] [&>button]:h-[31px] [&>button]:pl-[5px] [&>button]:text-left [&>button]:pt-px">
        <button role="option" aria-selected="true" class="bg-[#1abc9c] text-white">Remove Vocals: to mono</button>
        <button role="option">Remove Vocals</button>
        <button role="option">Isolate Vocals</button>
        <button role="option">Isolate Vocals and Invert</button>
        <button role="option">Remove Center: to mono</button>
        <button role="option">Remove Center</button>
        <button role="option">Isolate Center</button>
        <button role="option">Isolate Center and Invert</button>
        <button role="option">Analyze</button>
    </div>

    <!-- hand-drawn arrows -->
    <svg class="absolute inset-0 w-full h-full pointer-events-none" fill="none" stroke="#ff0606" stroke-width="3" stroke-linecap="round" stroke-linejoin="round">
        <path d="M815 182L769 171M782 168L769 171L775 185" />
        <path d="M534 276Q570 281 599 284M589 276L599 284L586 290" />
        <path d="M861 451L824 488M831 465L824 488L845 481" />
    </svg>

    <script>
        // seeded generator so the waveform is the same on every load
        function rng(s) {
            return () => (s = (s * 16807) % 2147483647) / 2147483647;
        }

        // x, solid height, extra spike height, rms height
        const env = [
            [0, 0, 0, 0], [5, 1, 0, 0], [16, 9, 4, 6], [20, 20, 8, 8], [30, 25, 10, 10], [36, 17, 6, 7], [42, 28, 22, 11],
            [58, 20, 14, 8], [72, 24, 20, 10], [90, 22, 18, 11], [97, 13, 8, 6], [110, 12, 8, 5], [114, 22, 34, 10],
            [138, 22, 28, 10], [146, 14, 12, 6], [170, 18, 20, 8], [200, 16, 16, 8], [214, 26, 28, 12], [250, 20, 26, 10],
            [320, 22, 26, 11], [400, 22, 32, 12], [430, 32, 44, 14], [520, 32, 38, 14], [650, 30, 30, 12], [700, 36, 36, 14],
            [760, 34, 50, 15], [830, 34, 36, 14], [910, 28, 28, 13], [950, 42, 44, 17], [1000, 42, 54, 17], [1050, 44, 54, 19],
            [1100, 44, 56, 20], [1150, 44, 56, 18], [1166, 40, 40, 15], [1185, 26, 10, 9], [1200, 16, 3, 6], [1215, 0, 0, 0]
        ];

        function level(x) {
            let i = 1;
            while (i < env.length - 1 && env[i][0] < x) i++;
            const a = env[i - 1], b = env[i], t = (x - a[0]) / (b[0] - a[0]);
            return [1, 2, 3].map(k => a[k] + (b[k] - a[k]) * t);
        }

        document.querySelectorAll('[data-wave]').forEach(svg => {
            const r = rng(Number(svg.dataset.wave) * 7919);
            let peak = '', rms = '', slow = .5, su = 0, sd = 0;
            for (let x = 0; x < 1216; x++) {
                const [base, spike, mid] = level(x);
                slow = slow * .82 + r() * .18;
                const swell = .5 + slow;
                // neighbouring columns share part of their spike
                su = su * .4 + Math.pow(r(), 3) * .8;
                sd = sd * .4 + Math.pow(r(), 3) * .8;
                const up = Math.min(71, Math.round(base * swell * (.86 + r() * .14) + spike * su));
                const dn = Math.min(71, Math.round(base * swell * (.86 + r() * .14) + spike * sd));
                const m = Math.round(mid * (swell * .8 + .15 + r() * .15));
                peak += `M${x} ${71 - up}h1v${up + dn + 1}h-1z`;
                rms += `M${x} ${71 - m}h1v${m * 2 + 1}h-1z`;
            }
            svg.innerHTML = `<path d="${peak}" fill="#222246"/><path d="${rms}" fill="#3f3f5c"/>`;
        });

        // timeline numbers and ticks
        let marks = '<path d="M4 19.500H1212" stroke="#8a8a8a"/><path d="M7 15v9L1 20zM1209 15v9l6-4z" fill="#8a8a8a"/>';
        ['0', '', '', '15', '', '', '30', '', '', '45', '', '', '1:00', '', ''].forEach((t, i) => {
            const x = Math.round(i * 82.9) + 1.5;
            marks += `<path d="M${x} ${t ? 22 : 24}v5" stroke="#111"/><text x="${x}" y="15" text-anchor="middle">${t}</text>`;
        });
        document.getElementById('ruler').innerHTML = marks;

        document.querySelectorAll('[data-ticks]').forEach(row => {
            for (const s of row.children) {
                s.innerHTML = `<i class="block w-px h-1 ${s.className ? '' : 'mx-auto'} bg-[#111]"></i><b class="font-normal bg-[#8e8e8e]">${s.textContent}</b>`;
            }
        });

        document.querySelectorAll('[data-slider]').forEach(svg => {
            const w = svg.getBoundingClientRect().width - 10, at = Number(svg.dataset.slider);
            let d = '';
            for (let i = 0; i <= 10; i++) d += `M${Math.round(2 + i * (w - 4) / 10) + .5} 13v4`;
            svg.innerHTML = `<path d="M2 17.500h${w}" stroke="#606060" stroke-width="2"/><path d="${d}" stroke="#606060"/><path d="M2 7.500h5M${w - 6} 7.500h5M${w - 3.5} 5v5" stroke="#111"/><use href="#thumb" x="${at - 6}" y="9" width="12" height="15"/>`;
        });

        document.querySelectorAll('[data-gain]').forEach(svg => {
            const [l, r] = svg.dataset.gain.split(',');
            let d = '';
            for (let i = 0; i <= 9; i++) d += `M${3.5 + i * 8} 14v4`;
            svg.innerHTML = `<path d="M3 18.500h76" stroke="#58585b" stroke-width="2"/><path d="${d}" stroke="#a4a4a8"/><text x="2" y="9" font-size="9" fill="#18191b">${l}</text><text x="70" y="9" font-size="9" fill="#18191b">${r}</text><use href="#thumb" x="33" y="10" width="12" height="15"/>`;
        });
    </script>
</body>

</html>
